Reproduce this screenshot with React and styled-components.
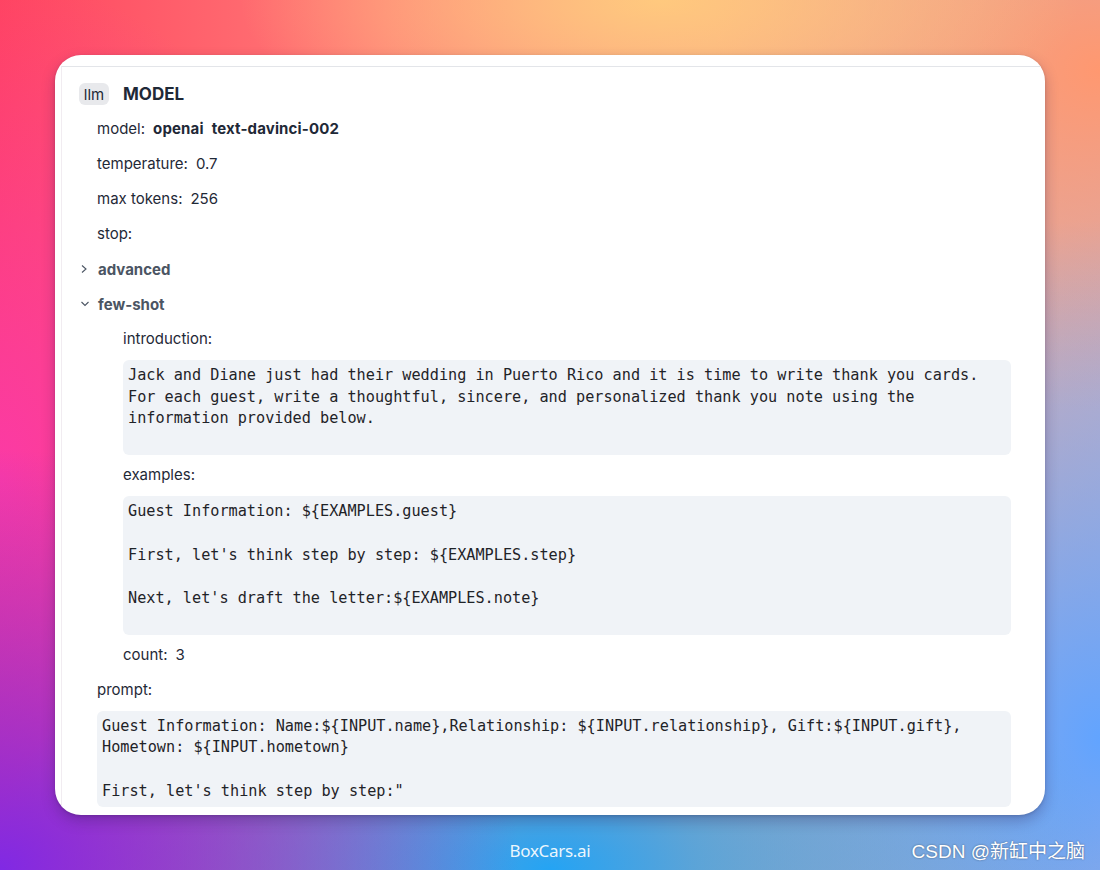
import React from 'react';
import styled, {createGlobalStyle} from 'styled-components';

const GlobalStyle = createGlobalStyle`
  html, body {
    margin: 0;
    padding: 0;
  }
  body {
    font-family: Inter, "Noto Sans", "Liberation Sans", sans-serif;
  }
`;

const Page = styled.div`
  position: relative;
  width: 1100px;
  height: 870px;
  overflow: hidden;
  display: flex;
  flex-direction: column;
  align-items: center;
  background:
    radial-gradient(ellipse 420px 160px at 60% 0%, #ffc97e 0%, rgba(255, 200, 128, 0) 100%),
    radial-gradient(ellipse 520px 420px at 0% 100%, #8029e4 0%, rgba(125, 46, 230, 0) 100%),
    radial-gradient(ellipse 560px 320px at 50% 100%, #24a4f4 0%, rgba(40, 166, 242, 0) 100%),
    radial-gradient(ellipse 420px 520px at 100% 85%, #62a4ff 0%, rgba(101, 166, 255, 0) 100%),
    radial-gradient(ellipse 360px 500px at 0% 55%, #fb3aa6 0%, rgba(251, 58, 166, 0) 100%),
    radial-gradient(ellipse 420px 340px at 100% 8%, #ff9870 0%, rgba(255, 152, 112, 0) 100%),
    linear-gradient(90deg, #ff4460 0%, #ff7e78 35%, #f9a688 65%, #d2afb8 100%);
`;

const Card = styled.div`
  margin-top: 55px;
  width: 990px;
  height: 760px;
  box-sizing: border-box;
  background: #fff;
  border-radius: 26px;
  overflow: hidden;
  padding: 11px 0 0 6px;
  box-shadow: 0 6px 14px rgba(40, 20, 80, 0.28), 0 1px 3px rgba(0, 0, 0, 0.15);
`;

const Panel = styled.div`
  height: 100%;
  box-sizing: border-box;
  border-top: 1px solid #e3e5e9;
  border-left: 1px solid #f1ecf1;
  padding: 16px 34px 0 17px;
  color: #1f2937;
  font-size: 15px;
`;

const Header = styled.div`
  display: flex;
  align-items: center;
  gap: 14px;
  height: 22px;
  margin-bottom: 13px;
`;

const Badge = styled.span`
  display: inline-flex;
  align-items: center;
  justify-content: center;
  width: 30px;
  height: 22px;
  border-radius: 6px;
  background: #e8e9ec;
  font-size: 15px;
  color: #1f2937;
`;

const Title = styled.span`
  font-size: 17px;
  font-weight: 700;
  color: #1f2937;
`;

const Row = styled.div`
  display: flex;
  align-items: center;
  gap: 8px;
  height: 22px;
  line-height: 22px;
  margin-left: ${p => p.$indent || 18}px;
  margin-bottom: ${p => (p.$tight ? 10 : 13)}px;
`;

const Value = styled.span`
  font-weight: ${p => (p.$bold ? 700 : 400)};
  letter-spacing: ${p => (p.$bold ? '0.15px' : '0')};
`;

const Toggle = styled.div`
  display: flex;
  align-items: center;
  height: 22px;
  margin-bottom: 13px;
  color: #4b5563;
  font-weight: 700;
`;

const Chevron = styled.span`
  display: inline-flex;
  width: 18px;
  justify-content: flex-start;
  padding-left: 1px;
`;

const Code = styled.pre`
  margin: 0 0 9px ${p => p.$indent || 44}px;
  padding: 5px 5px ${p => (p.$trail ? 25 : 5)}px;
  background: #f0f3f7;
  border-radius: 6px;
  font-family: "DejaVu Sans Mono", "Liberation Mono", monospace;
  font-size: 15.2px;
  line-height: 21.7px;
  color: #1f2328;
  white-space: pre-wrap;
`;

const Footer = styled.div`
  margin-top: 25px;
  color: rgba(255, 255, 255, 0.92);
  font-size: 17px;
  line-height: 22px;
  font-family: "Noto Sans", Inter, sans-serif;
  letter-spacing: -0.3px;
`;

const Watermark = styled.div`
  position: absolute;
  right: 15px;
  bottom: 7px;
  color: #fff;
  font-size: 19px;
  font-family: "Liberation Sans", "Noto Sans CJK SC", sans-serif;
  text-shadow: 0 0 2px rgba(0, 0, 0, 0.45);
`;

const Right = () => (
  <svg width="8" height="10" viewBox="0 0 8 10">
    <polyline points="2,1.5 6,5 2,8.5" fill="none" stroke="#4b5563" strokeWidth="1.1"/>
  </svg>
);

const Down = () => (
  <svg width="10" height="8" viewBox="0 0 10 8">
    <polyline points="1.5,2 5,5.5 8.5,2" fill="none" stroke="#4b5563" strokeWidth="1.1"/>
  </svg>
);

const intro = `Jack and Diane just had their wedding in Puerto Rico and it is time to write thank you cards.
For each guest, write a thoughtful, sincere, and personalized thank you note using the
information provided below.`;

const examples = `Guest Information: \${EXAMPLES.guest}

First, let's think step by step: \${EXAMPLES.step}

Next, let's draft the letter:\${EXAMPLES.note}`;

const prompt = `Guest Information: Name:\${INPUT.name},Relationship: \${INPUT.relationship}, Gift:\${INPUT.gift},
Hometown: \${INPUT.hometown}

First, let's think step by step:"`;

export default function App() {
  return (
    <Page>
      <GlobalStyle/>
      <Card>
        <Panel>
          <Header>
            <Badge>llm</Badge>
            <Title>MODEL</Title>
          </Header>
          <Row>
            <span>model:</span>
            <Value $bold>openai</Value>
            <Value $bold>text-davinci-002</Value>
          </Row>
          <Row>
            <span>temperature:</span>
            <Value>0.7</Value>
          </Row>
          <Row>
            <span>max tokens:</span>
            <Value>256</Value>
          </Row>
          <Row>
            <span>stop:</span>
          </Row>
          <Toggle>
            <Chevron><Right/></Chevron>
            advanced
          </Toggle>
          <Toggle>
            <Chevron><Down/></Chevron>
            few-shot
          </Toggle>
          <Row $indent={44} $tight>
            <span>introduction:</span>
          </Row>
          <Code $trail>{intro}</Code>
          <Row $indent={44} $tight>
            <span>examples:</span>
          </Row>
          <Code $trail>{examples}</Code>
          <Row $indent={44}>
            <span>count:</span>
            <Value>3</Value>
          </Row>
          <Row $tight>
            <span>prompt:</span>
          </Row>
          <Code $indent={18}>{prompt}</Code>
        </Panel>
      </Card>
      <Footer>BoxCars.ai</Footer>
      <Watermark>CSDN @新缸中之脑</Watermark>
    </Page>
  );
}
